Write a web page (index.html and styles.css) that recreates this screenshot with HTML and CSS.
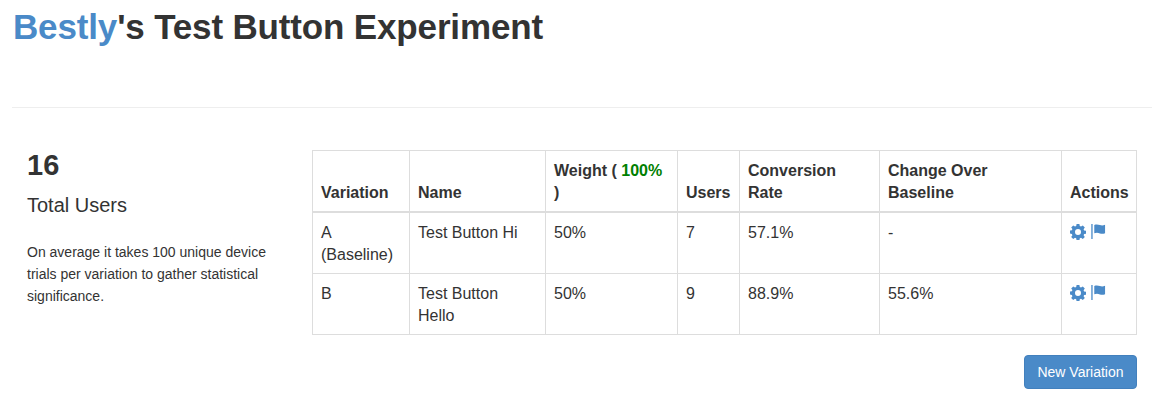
FILE: index.html
```html
<!DOCTYPE html>
<html lang="en">
<head>
<meta charset="utf-8">
<title>Bestly's Test Button Experiment</title>
<link rel="stylesheet" href="styles.css">
</head>
<body>
<svg class="defs" width="0" height="0" aria-hidden="true">
  <defs>
    <symbol id="gear" viewBox="0 0 16 16">
      <path fill-rule="evenodd" d="M6.600 0h2.800l.4 2.100 1.200.5L12.800 1.400l2 2-1.200 1.800.5 1.200 2.100.4v2.800l-2.100.4-.5 1.200 1.200 1.800-2 2-1.800-1.200-1.200.5-.4 2.100H6.600l-.4-2.100-1.200-.5-1.800 1.200-2-2 1.200-1.800-.5-1.200L-.2 9.400V6.600l2.100-.4.5-1.200L1.200 3.400l2-2L5 2.600l1.200-.5zM8 5a3 3 0 1 0 0 6 3 3 0 0 0 0-6z"/>
    </symbol>
    <symbol id="flag" viewBox="0 0 16 16">
      <path d="M0 0h2v16H0z" opacity=".7"/>
      <path d="M3.500 1c2-.8 4-.6 6 .1s3.500.5 5.500-.3v9c-2 .8-3.500 1-5.500.2s-4-.9-6-.1z"/>
    </symbol>
  </defs>
</svg>
<header class="page-header">
  <h1 class="title"><span class="brand">Bestly</span>'s Test Button Experiment</h1>
</header>
<main class="content">
  <aside class="summary">
    <h2 class="count">16</h2>
    <h3 class="count-label">Total Users</h3>
    <p class="note">On average it takes 100 unique device trials per variation to gather statistical significance.</p>
  </aside>
  <section class="results">
    <table class="grid">
      <colgroup>
        <col class="c1"><col class="c2"><col class="c3"><col class="c4"><col class="c5"><col class="c6"><col class="c7">
      </colgroup>
      <thead>
        <tr>
          <th>Variation</th>
          <th>Name</th>
          <th>Weight ( <span class="ok">100%</span> )</th>
          <th>Users</th>
          <th>Conversion Rate</th>
          <th>Change Over Baseline</th>
          <th>Actions</th>
        </tr>
      </thead>
      <tbody>
        <tr>
          <td>A (Baseline)</td>
          <td>Test Button Hi</td>
          <td>50%</td>
          <td>7</td>
          <td>57.1%</td>
          <td>-</td>
          <td class="actions"><svg class="ico gear"><use href="#gear"/></svg><svg class="ico"><use href="#flag"/></svg></td>
        </tr>
        <tr>
          <td>B</td>
          <td>Test Button Hello</td>
          <td>50%</td>
          <td>9</td>
          <td>88.9%</td>
          <td>55.6%</td>
          <td class="actions"><svg class="ico gear"><use href="#gear"/></svg><svg class="ico"><use href="#flag"/></svg></td>
        </tr>
      </tbody>
    </table>
    <div class="toolbar"><button class="btn" type="button">New Variation</button></div>
  </section>
</main>
</body>
</html>
```
FILE: styles.css
```css
* { box-sizing: border-box; }
html, body { margin: 0; height: 403px; overflow: hidden; }
body {
  font-family: "Liberation Sans", Arial, sans-serif;
  font-size: 16px;
  line-height: 22px;
  color: #333;
  background: #fff;
}
.defs { position: absolute; }
.page-header {
  margin-left: 12px;
  margin-right: 1px;
  height: 108px;
  border-bottom: 1px solid #eee;
}
.title {
  margin: 0;
  padding: 7px 0 0 1px;
  font-size: 35px;
  line-height: 40px;
  font-weight: 700;
  letter-spacing: -0.155px;
  color: #333;
}
.brand { color: #4a8ac8; }
.content {
  display: flex;
  padding: 42px 17px 0 27px;
}
.summary { width: 285px; flex: none; }
.count { margin: 0; font-size: 29px; line-height: 31px; font-weight: 700; }
.count-label { margin: 13px 0 0; font-size: 20px; line-height: 22px; font-weight: 400; }
.note { margin: 25px 0 0; width: 250px; font-size: 14px; line-height: 22px; }
.results { flex: 1; }
.grid {
  width: 824px;
  table-layout: fixed;
  border-collapse: collapse;
  border: 1px solid #ddd;
}
.c1 { width: 97px; }
.c2 { width: 136px; }
.c3 { width: 132px; }
.c4 { width: 62px; }
.c5 { width: 140px; }
.c6 { width: 182px; }
.c7 { width: 75px; }
.grid th, .grid td {
  padding: 9px 8px 7px;
  border: 1px solid #ddd;
  vertical-align: top;
  text-align: left;
  font-size: 16px;
  line-height: 22px;
}
.grid th { vertical-align: bottom; border-bottom-width: 2px; font-weight: 700; }
.ok { color: #008000; }
.actions { white-space: nowrap; }
.ico { width: 15px; height: 15px; fill: #4a8ac8; vertical-align: -1px; }
.gear { width: 16px; height: 16px; margin-right: 5px; vertical-align: -2px; }
.toolbar { display: flex; justify-content: flex-end; margin-top: 20px; }
.btn {
  width: 113px;
  height: 34px;
  padding: 0;
  font: 14px/20px "Liberation Sans", Arial, sans-serif;
  color: #fff;
  background: #4a8ac8;
  border: 1px solid #4280bd;
  border-radius: 4px;
}
```
